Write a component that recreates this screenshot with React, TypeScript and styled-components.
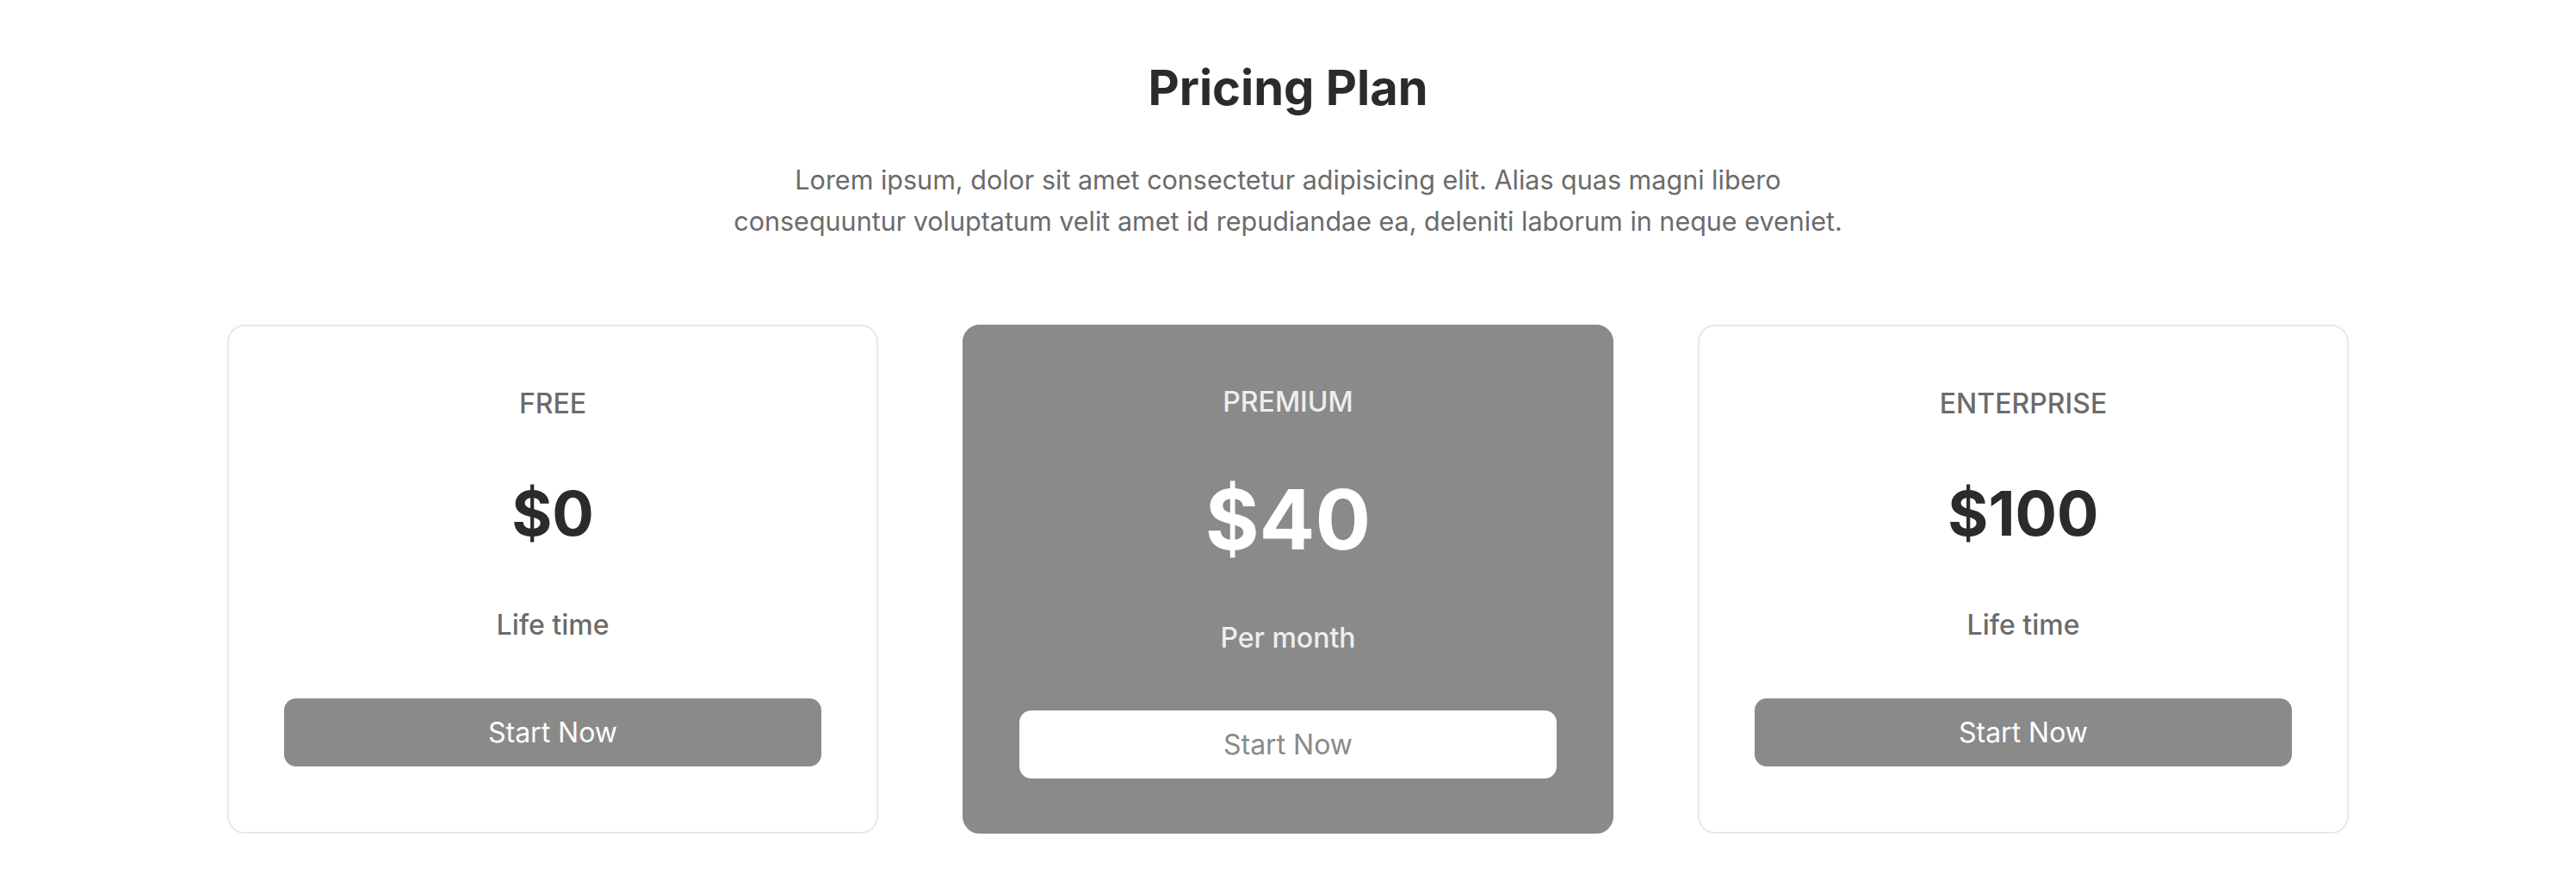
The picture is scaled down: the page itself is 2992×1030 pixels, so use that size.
import React from 'react';
import styled, { createGlobalStyle } from 'styled-components';

const GlobalStyle = createGlobalStyle`
  * {
    box-sizing: border-box;
  }
  body {
    margin: 0;
    background: #ffffff;
    font-family: Inter, "Noto Sans", "Liberation Sans", sans-serif;
  }
`;

const Page = styled.section`
  padding-top: 74px;
  display: flex;
  flex-direction: column;
  align-items: center;
`;

const Title = styled.h1`
  margin: 0;
  font-size: 56px;
  line-height: 1;
  font-weight: 700;
  color: #2b2b2b;
`;

const Intro = styled.p`
  margin: 55px 0 0;
  font-size: 30.5px;
  line-height: 48px;
  color: #6b6b6b;
  text-align: center;
`;

const Plans = styled.div`
  width: 2464px;
  margin-top: 96px;
  display: grid;
  grid-template-columns: repeat(3, 1fr);
  gap: 98px;
`;

const Card = styled.div<{ $featured?: boolean }>`
  display: flex;
  flex-direction: column;
  align-items: center;
  padding: ${(p) => (p.$featured ? '72px 64px 62px' : '74px 64px 76px')};
  border: 2px solid ${(p) => (p.$featured ? '#8a8a8a' : '#e8e8e8')};
  border-radius: 20px;
  background: ${(p) => (p.$featured ? '#8a8a8a' : '#ffffff')};
`;

const PlanName = styled.h3<{ $featured?: boolean }>`
  margin: 0;
  font-size: 32px;
  line-height: 1;
  font-weight: 500;
  color: ${(p) => (p.$featured ? '#eeeeee' : '#6b6b6b')};
`;

const Price = styled.div<{ $featured?: boolean }>`
  margin-top: ${(p) => (p.$featured ? '72px' : '75px')};
  font-size: ${(p) => (p.$featured ? '96px' : '72px')};
  line-height: 1;
  font-weight: 700;
  color: ${(p) => (p.$featured ? '#ffffff' : '#2b2b2b')};
`;

const Period = styled.div<{ $featured?: boolean }>`
  margin-top: ${(p) => (p.$featured ? '74px' : '78px')};
  font-size: 32px;
  line-height: 1;
  font-weight: 500;
  color: ${(p) => (p.$featured ? '#eeeeee' : '#6b6b6b')};
`;

const StartButton = styled.button<{ $featured?: boolean }>`
  margin-top: ${(p) => (p.$featured ? '68px' : '69px')};
  width: 100%;
  height: 79px;
  border: none;
  border-radius: 14px;
  font-family: inherit;
  font-size: 32px;
  font-weight: 400;
  background: ${(p) => (p.$featured ? '#ffffff' : '#8a8a8a')};
  color: ${(p) => (p.$featured ? '#8a8a8a' : '#ffffff')};
  cursor: pointer;
`;

const plans = [
  { name: 'FREE', price: '$0', period: 'Life time', featured: false },
  { name: 'PREMIUM', price: '$40', period: 'Per month', featured: true },
  { name: 'ENTERPRISE', price: '$100', period: 'Life time', featured: false },
];

const App: React.FC = () => {
  return (
    <>
      <GlobalStyle />
      <Page>
        <Title>Pricing Plan</Title>
        <Intro>
          Lorem ipsum, dolor sit amet consectetur adipisicing elit. Alias quas magni libero
          <br />
          consequuntur voluptatum velit amet id repudiandae ea, deleniti laborum in neque eveniet.
        </Intro>
        <Plans>
          {plans.map((plan) => (
            <Card key={plan.name} $featured={plan.featured}>
              <PlanName $featured={plan.featured}>{plan.name}</PlanName>
              <Price $featured={plan.featured}>{plan.price}</Price>
              <Period $featured={plan.featured}>{plan.period}</Period>
              <StartButton $featured={plan.featured}>Start Now</StartButton>
            </Card>
          ))}
        </Plans>
      </Page>
    </>
  );
};

export default App;
